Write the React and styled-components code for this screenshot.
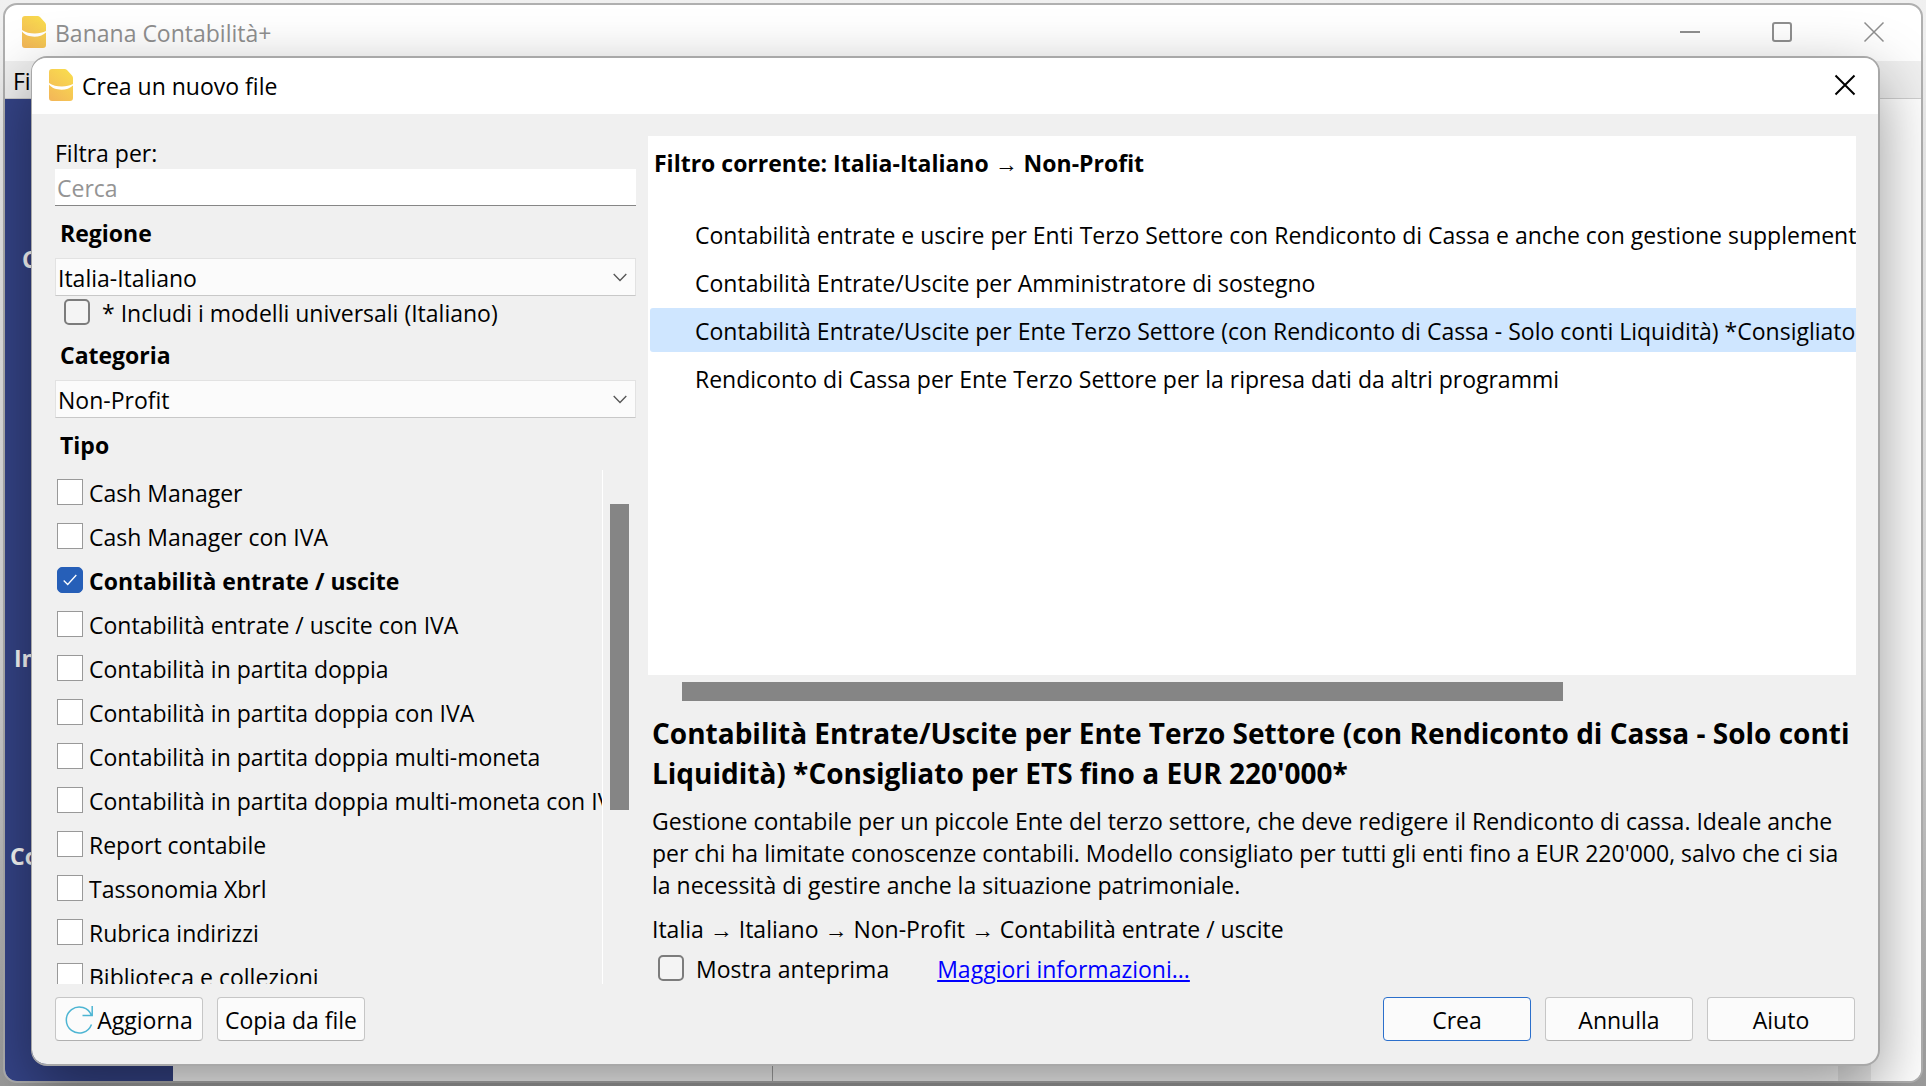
import React from "react";
import styled, { createGlobalStyle } from "styled-components";

const Global = createGlobalStyle`
  *, *::before, *::after { box-sizing: border-box; }
  html, body, #root { height: 100%; }
  body { margin: 0; overflow: hidden; }
  body, button, input, select {
    font-family: "Open Sans", "Noto Sans", sans-serif;
    font-size: 23px;
    line-height: 32px;
    color: #000;
  }
  h1, h2, h3, p, ul { margin: 0; padding: 0; font: inherit; list-style: none; }
`;

const Desktop = styled.div`
  position: relative;
  height: 100%;
  min-height: 700px;
  padding: 3px;
  background: linear-gradient(#f0f0f0, #d8d8d8 60%, #9c9c9c);
`;

const MainWindow = styled.div`
  display: flex;
  flex-direction: column;
  height: 100%;
  border: 2px solid #b0b0b0;
  border-radius: 14px;
  overflow: hidden;
  background: #fff;
`;

const TitleBar = styled.header`
  display: flex;
  align-items: center;
  gap: 9px;
  flex: none;
  height: 56px;
  padding: 0 ${(p) => (p.$active ? 10 : 24)}px 2px 17px;
  background: ${(p) => (p.$active ? "#fff" : "transparent")};
  color: ${(p) => (p.$active ? "#000" : "#8f8f8f")};
`;

const TitleText = styled.h1`
  flex: 1;
  padding-top: 2px;
`;

const WindowButtons = styled.div`
  display: flex;
  gap: 46px;
`;

const WindowButton = styled.button`
  display: grid;
  place-items: center;
  width: 46px;
  height: 32px;
  padding: 0;
  border: 0;
  background: none;
  color: inherit;
`;

const MenuBar = styled.nav`
  flex: none;
  height: 38px;
  padding: 4px 8px;
  background: #f0f0f0;
  border-bottom: 1px solid #cfcfcf;
`;

const Workspace = styled.div`
  display: grid;
  grid-template-columns: 168px 600px 1fr 33px 50px;
  flex: 1;
  min-height: 0;
`;

const SideBar = styled.aside`
  display: grid;
  grid-template-rows: 399px 198px 1fr;
  padding-top: 144px;
  background: #354488;
  color: #fff;
  font-weight: 700;
`;

const SideHeading = styled.span`
  padding-left: ${(p) => p.$indent}px;
`;

const Pane = styled.div`
  background: ${(p) => (p.$dim ? "#ececec" : "#fff")};
  border-right: ${(p) => (p.$divided ? "1px solid #a8a8a8" : "0")};
`;

const Dialog = styled.section`
  position: absolute;
  inset: 56px 46px 20px 31px;
  display: flex;
  flex-direction: column;
  border: 2px solid #a8a8a8;
  border-left-width: 1px;
  border-radius: 16px;
  overflow: hidden;
  background: #f0f0f0;
  background-clip: padding-box;
  box-shadow: 0 24px 64px rgba(0, 0, 0, 0.42);
`;

const DialogBody = styled.div`
  display: grid;
  grid-template-columns: minmax(0, 581px) minmax(0, 1fr);
  column-gap: 12px;
  flex: 1;
  min-height: 0;
  padding: 22px 22px 0 23px;
`;

const Filters = styled.form`
  display: flex;
  flex-direction: column;
  min-height: 0;
`;

const FieldLabel = styled.label`
  padding-top: 1px;
`;

const SearchInput = styled.input`
  width: 100%;
  height: 37px;
  padding: 2px 2px 0;
  border: 0;
  border-bottom: 1px solid #868686;
  background: #fff;
  &::placeholder { color: #949494; opacity: 1; }
`;

const GroupLabel = styled.label`
  display: block;
  padding: 11px 5px 9px;
  font-weight: 700;
`;

const SelectBox = styled.div`
  display: grid;
  align-items: center;
  & > * { grid-area: 1 / 1; }
  & > svg { justify-self: end; margin-right: 9px; pointer-events: none; }
`;

const Select = styled.select`
  appearance: none;
  width: 100%;
  height: 38px;
  padding: 2px 32px 0 2px;
  border: 1px solid #e2e2e2;
  border-bottom-color: #c8c8c8;
  border-radius: 0;
  background: #fbfbfb;
`;

const CheckLabel = styled.label`
  display: flex;
  align-items: center;
  gap: ${(p) => p.$gap}px;
  height: ${(p) => p.$height}px;
  padding-left: ${(p) => p.$indent}px;
  font-weight: ${(p) => (p.$strong ? 700 : 400)};
  white-space: nowrap;
`;

const CheckText = styled.span`
  padding-top: 2px;
`;

const CheckFrame = styled.span`
  display: grid;
  place-items: center;
  flex: none;
  & > * { grid-area: 1 / 1; }
  & > svg { pointer-events: none; visibility: hidden; }
  & > input:checked + svg { visibility: visible; }
`;

const CheckInput = styled.input`
  appearance: none;
  width: 26px;
  height: 26px;
  margin: 0;
  border: ${(p) => (p.$rounded ? "2px solid #7c7c7c" : "1px solid #999")};
  border-radius: ${(p) => (p.$rounded ? 5 : 0)}px;
  background: ${(p) => (p.$rounded ? "#f4f4f4" : "#fff")};
  &:checked { border-color: #265fb8; border-radius: 5px; background: #265fb8; }
`;

const TypeArea = styled.div`
  display: grid;
  grid-template-columns: minmax(0, 1fr) 33px;
  flex: 1;
  min-height: 0;
`;

const TypeList = styled.ul`
  min-height: 0;
  overflow: hidden;
  border-right: 1px solid #fff;
`;

const VerticalTrack = styled.div`
  padding: 34px 7px 0;
`;

const VerticalThumb = styled.div`
  height: 306px;
  background: #858585;
`;

const Results = styled.div`
  display: flex;
  flex-direction: column;
  min-width: 0;
  min-height: 0;
`;

const ResultPanel = styled.div`
  flex: 1;
  min-height: 0;
  overflow: hidden;
  padding-left: 2px;
  background: #fff;
`;

const CurrentFilter = styled.h2`
  padding: 11px 4px 33px;
  font-weight: 700;
`;

const ResultItem = styled.li`
  margin: 0 0 4px;
  padding: 7px 0 5px 45px;
  border-radius: 3px 0 0 3px;
  background: ${(p) => (p.$selected ? "#cfe6ff" : "transparent")};
  white-space: nowrap;
  overflow: hidden;
`;

const HorizontalTrack = styled.div`
  padding: 7px 293px 0 34px;
`;

const HorizontalThumb = styled.div`
  height: 19px;
  background: #858585;
`;

const Details = styled.div`
  padding: 12px 0 0 4px;
`;

const DetailTitle = styled.h2`
  font-size: 28px;
  line-height: 40px;
  font-weight: 700;
`;

const Paragraph = styled.p`
  padding-top: 12px;
`;

const OptionRow = styled.div`
  display: flex;
  align-items: center;
  gap: 48px;
  height: 39px;
  padding-top: 7px;
`;

const MoreLink = styled.a`
  padding-top: 2px;
  color: #00f;
  text-decoration: underline;
`;

const Footer = styled.footer`
  display: flex;
  gap: 14px;
  padding: 13px 23px 23px;
`;

const Spacer = styled.span`
  flex: 1;
`;

const Button = styled.button`
  display: flex;
  align-items: center;
  justify-content: center;
  gap: 4px;
  width: 148px;
  height: 44px;
  padding: 2px 0 0;
  border: 1px solid ${(p) => (p.$primary ? "#2b6fcb" : "#c6c6c6")};
  border-bottom-color: ${(p) => (p.$primary ? "#2b6fcb" : "#b0b0b0")};
  border-radius: 4px;
  background: #fbfbfb;
  white-space: nowrap;
`;

function Logo({ id }) {
  return (
    <svg width="24" height="32" viewBox="0 0 24 32" aria-hidden="true">
      <defs>
        <linearGradient id={id} x1="0.8" y1="0" x2="0.2" y2="1">
          <stop offset="0" stopColor="#f9dc4e" />
          <stop offset="1" stopColor="#f3b858" />
        </linearGradient>
      </defs>
      <path
        fill={`url(#${id})`}
        d="M3 0h12.500q1.500 0 2.500 1l5 5.500q1 1.200 1 2.500V15C18 18.500 6 18.500 0 14V3Q0 0 3 0ZM0 15.500C5 22 18 22.500 24 16.500V29q0 3-3 3H3q-3 0-3-3Z"
      />
    </svg>
  );
}

function CloseIcon({ width }) {
  return (
    <svg width="22" height="22" viewBox="0 0 22 22" fill="none" stroke="currentColor" strokeWidth={width}>
      <path d="M1.500 1.500l19 19M20.500 1.500l-19 19" />
    </svg>
  );
}

function Chevron() {
  return (
    <svg width="14" height="9" viewBox="0 0 14 9" fill="none" stroke="#555" strokeWidth="1.300">
      <path d="M.7 1l6.300 6.500L13.300 1" />
    </svg>
  );
}

function RefreshIcon() {
  return (
    <svg width="28" height="28" viewBox="0 0 28 28" fill="none" stroke="#4db5d3" strokeWidth="1.500">
      <path d="M26.500 18.500A13 13 0 1 1 26.500 9.500M27.200 0V9.600H17.500" />
    </svg>
  );
}

function Check({ label, rounded, height = 44, gap = 6, indent = 2, checked }) {
  return (
    <CheckLabel $gap={gap} $height={height} $indent={indent} $strong={checked}>
      <CheckFrame>
        <CheckInput type="checkbox" defaultChecked={checked} $rounded={rounded} />
        <svg width="14" height="12" viewBox="0 0 14 12" fill="none" stroke="#fff" strokeWidth="1.300">
          <path d="M.7 6.500l4 4L13.300 1" />
        </svg>
      </CheckFrame>
      <CheckText>{label}</CheckText>
    </CheckLabel>
  );
}

const types = [
  "Cash Manager",
  "Cash Manager con IVA",
  "Contabilità entrate / uscite",
  "Contabilità entrate / uscite con IVA",
  "Contabilità in partita doppia",
  "Contabilità in partita doppia con IVA",
  "Contabilità in partita doppia multi-moneta",
  "Contabilità in partita doppia multi-moneta con IVA",
  "Report contabile",
  "Tassonomia Xbrl",
  "Rubrica indirizzi",
  "Biblioteca e collezioni",
];

const templates = [
  "Contabilità entrate e uscire per Enti Terzo Settore con Rendiconto di Cassa e anche con gestione supplement",
  "Contabilità Entrate/Uscite per Amministratore di sostegno",
  "Contabilità Entrate/Uscite per Ente Terzo Settore (con Rendiconto di Cassa - Solo conti Liquidità) *Consigliato",
  "Rendiconto di Cassa per Ente Terzo Settore per la ripresa dati da altri programmi",
];

export default function App() {
  return (
    <Desktop>
      <Global />
      <MainWindow>
        <TitleBar>
          <Logo id="main-logo" />
          <TitleText>Banana Contabilità+</TitleText>
          <WindowButtons>
            <WindowButton aria-label="Riduci">
              <svg width="20" height="2" viewBox="0 0 20 2"><path d="M0 0h20v2H0z" fill="currentColor" /></svg>
            </WindowButton>
            <WindowButton aria-label="Ingrandisci">
              <svg width="20" height="20" viewBox="0 0 20 20" fill="none" stroke="currentColor" strokeWidth="2">
                <rect x="1" y="1" width="18" height="18" rx="2" />
              </svg>
            </WindowButton>
            <WindowButton aria-label="Chiudi finestra"><CloseIcon width={1.5} /></WindowButton>
          </WindowButtons>
        </TitleBar>
        <MenuBar>Fi</MenuBar>
        <Workspace>
          <SideBar>
            <SideHeading $indent={17}>C</SideHeading>
            <SideHeading $indent={9}>In</SideHeading>
            <SideHeading $indent={5}>Co</SideHeading>
          </SideBar>
          <Pane $divided />
          <Pane />
          <Pane $dim />
          <Pane />
        </Workspace>
      </MainWindow>

      <Dialog role="dialog" aria-labelledby="dialog-title">
        <TitleBar $active>
          <Logo id="dialog-logo" />
          <TitleText id="dialog-title">Crea un nuovo file</TitleText>
          <WindowButton aria-label="Chiudi"><CloseIcon width={2} /></WindowButton>
        </TitleBar>
        <DialogBody>
          <Filters>
            <FieldLabel htmlFor="search">Filtra per:</FieldLabel>
            <SearchInput id="search" placeholder="Cerca" />
            <GroupLabel htmlFor="region">Regione</GroupLabel>
            <SelectBox>
              <Select id="region"><option>Italia-Italiano</option></Select>
              <Chevron />
            </SelectBox>
            <Check label="* Includi i modelli universali (Italiano)" rounded height={32} gap={12} indent={9} />
            <GroupLabel htmlFor="category">Categoria</GroupLabel>
            <SelectBox>
              <Select id="category"><option>Non-Profit</option></Select>
              <Chevron />
            </SelectBox>
            <GroupLabel as="h3">Tipo</GroupLabel>
            <TypeArea>
              <TypeList>
                {types.map((t, i) => (
                  <li key={t}><Check label={t} checked={i === 2} /></li>
                ))}
              </TypeList>
              <VerticalTrack><VerticalThumb /></VerticalTrack>
            </TypeArea>
          </Filters>
          <Results>
            <ResultPanel>
              <CurrentFilter>Filtro corrente: Italia-Italiano → Non-Profit</CurrentFilter>
              <ul>
                {templates.map((t, i) => (
                  <ResultItem key={t} $selected={i === 2}>{t}</ResultItem>
                ))}
              </ul>
            </ResultPanel>
            <HorizontalTrack><HorizontalThumb /></HorizontalTrack>
            <Details>
              <DetailTitle>
                Contabilità Entrate/Uscite per Ente Terzo Settore (con Rendiconto di Cassa - Solo conti Liquidità) *Consigliato per ETS fino a EUR 220'000*
              </DetailTitle>
              <Paragraph>
                Gestione contabile per un piccole Ente del terzo settore, che deve redigere il Rendiconto di cassa. Ideale anche per chi ha limitate conoscenze contabili. Modello consigliato per tutti gli enti fino a EUR 220'000, salvo che ci sia la necessità di gestire anche la situazione patrimoniale.
              </Paragraph>
              <Paragraph>Italia → Italiano → Non-Profit → Contabilità entrate / uscite</Paragraph>
              <OptionRow>
                <Check label="Mostra anteprima" rounded height={32} gap={12} indent={6} />
                <MoreLink href="#info">Maggiori informazioni...</MoreLink>
              </OptionRow>
            </Details>
          </Results>
        </DialogBody>
        <Footer>
          <Button><RefreshIcon />Aggiorna</Button>
          <Button>Copia da file</Button>
          <Spacer />
          <Button $primary>Crea</Button>
          <Button>Annulla</Button>
          <Button>Aiuto</Button>
        </Footer>
      </Dialog>
    </Desktop>
  );
}
